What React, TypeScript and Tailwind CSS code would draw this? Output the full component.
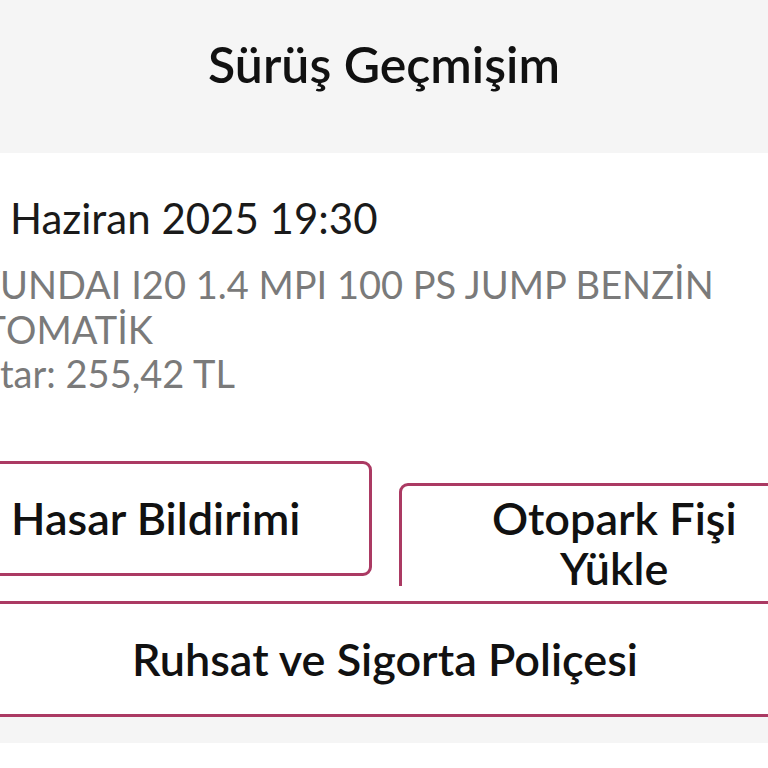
import React from "react";

export default function App() {
  return (
    <div className="w-[768px] h-[768px] overflow-hidden bg-white font-['Lato','Open_Sans',sans-serif]">
      <div className="h-[153px] bg-[#f5f5f5] pt-[34px] text-center">
        <h1 className="text-[50px] leading-[60px] font-semibold text-[#111111]">Sürüş Geçmişim</h1>
      </div>

      <div className="bg-white pt-[40px]">
        <div className="flex whitespace-nowrap text-[42px] leading-[50px] text-[#1a1a1a]">
          <span className="flex w-[10px] shrink-0 justify-end">
            <span className="shrink-0">25&nbsp;</span>
          </span>
          <span>Haziran 2025 19:30</span>
        </div>

        <div className="mt-[19px] text-[38px] leading-[44.5px] text-[#7a7a7a]">
          <div className="flex whitespace-nowrap">
            <span className="flex w-0 shrink-0 justify-end">
              <span className="shrink-0">HY</span>
            </span>
            <span>UNDAI I20 1.4 MPI 100 PS JUMP BENZİN</span>
          </div>
          <div className="flex whitespace-nowrap">
            <span className="flex w-[6px] shrink-0 justify-end">
              <span className="shrink-0">OT</span>
            </span>
            <span>OMATİK</span>
          </div>
          <div className="flex whitespace-nowrap">
            <span className="flex w-0 shrink-0 justify-end">
              <span className="shrink-0">Tu</span>
            </span>
            <span>tar: 255,42 TL</span>
          </div>
        </div>

        <div className="ml-[-60px] w-[890px] mt-[65px]">
          <div className="grid h-[125px] grid-cols-2 items-start gap-[27px] overflow-hidden">
            <button className="flex h-[115px] items-center justify-center rounded-[9px] border-[3px] border-[#ab3a63] bg-white text-[45px] leading-[50px] font-semibold text-[#111111]">
              Hasar Bildirimi
            </button>
            <button className="mt-[22px] flex h-[200px] flex-col items-center justify-start rounded-[9px] border-[3px] border-[#ab3a63] bg-white pt-[7px] text-center text-[45px] leading-[50px] font-semibold text-[#111111]">
              <span>Otopark Fişi</span>
              <span>Yükle</span>
            </button>
          </div>
          <button className="mt-[15px] flex h-[116px] w-full items-center justify-center rounded-[9px] border-[3px] border-[#ab3a63] bg-white text-[45px] leading-[50px] font-semibold text-[#111111]">
            Ruhsat ve Sigorta Poliçesi
          </button>
        </div>
      </div>

      <div className="h-[26px] bg-[#f5f5f5]" />
      <div className="h-[40px] bg-white" />
    </div>
  );
}
